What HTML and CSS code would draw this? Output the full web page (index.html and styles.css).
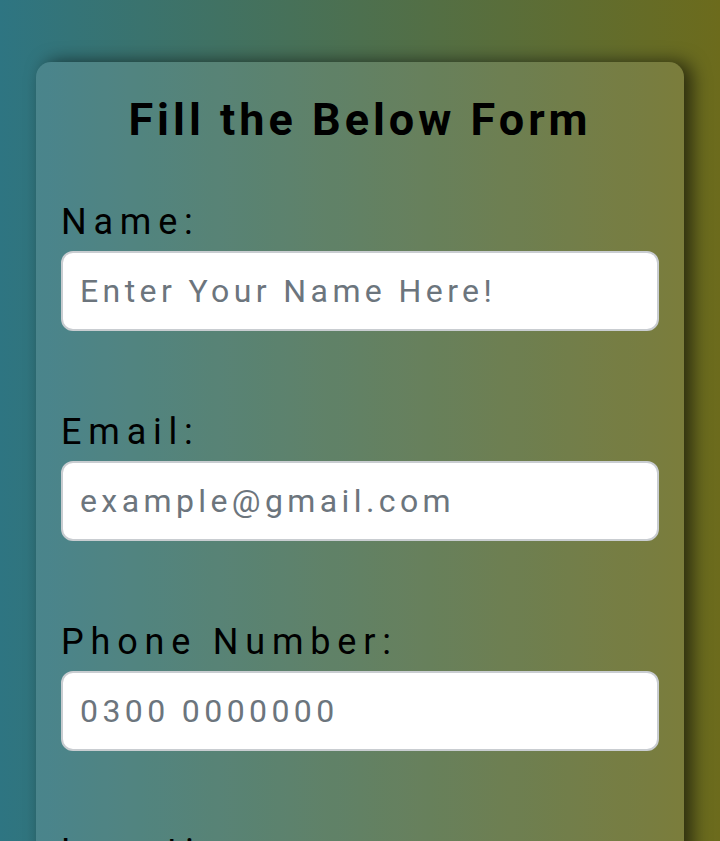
FILE: index.html
```html
<!DOCTYPE html>
<html lang="en">
<head>
<meta charset="utf-8">
<title>Form</title>
<link rel="stylesheet" href="styles.css">
</head>
<body>
<div class="page">
  <form class="card">
    <h1 class="title">Fill the Below Form</h1>
    <div class="field">
      <label class="label" for="name">Name:</label>
      <input class="input" id="name" type="text" placeholder="Enter Your Name Here!">
    </div>
    <div class="field">
      <label class="label" for="email">Email:</label>
      <input class="input" id="email" type="email" placeholder="example@gmail.com">
    </div>
    <div class="field">
      <label class="label" for="phone">Phone Number:</label>
      <input class="input" id="phone" type="tel" placeholder="0300 0000000">
    </div>
    <div class="field">
      <label class="label" for="location">Location:</label>
      <input class="input" id="location" type="text" placeholder="Enter Your City">
    </div>
  </form>
</div>
</body>
</html>
```
FILE: styles.css
```css
html, body {
  margin: 0;
  padding: 0;
}
body {
  min-height: 100vh;
  background: linear-gradient(to right, #2e7582, #6c6b1c);
  font-family: Roboto, "Liberation Sans", sans-serif;
  overflow: hidden;
}
.page {
  padding: 62px 36px 40px;
}
.card {
  display: flex;
  flex-direction: column;
  padding: 31px 25px 40px;
  border-radius: 15px;
  background: rgba(255, 255, 255, 0.12);
  box-shadow: 8px 0 18px rgba(0, 0, 0, 0.6);
}
.title {
  margin: 0;
  font-size: 45px;
  line-height: 53px;
  font-weight: 700;
  text-align: center;
  letter-spacing: 4px;
  color: #000;
}
.field {
  display: flex;
  flex-direction: column;
  margin-top: 80px;
}
.title + .field {
  margin-top: 55px;
}
.label {
  font-size: 36px;
  line-height: 43px;
  letter-spacing: 6.8px;
  color: #000;
  margin-bottom: 7px;
}
.input {
  box-sizing: border-box;
  height: 80px;
  margin: 0;
  padding: 0 16px 0 17px;
  border: 2px solid #c9cdd1;
  border-radius: 12px;
  background: #fff;
  font-family: Roboto, "Liberation Sans", sans-serif;
  font-size: 32px;
  letter-spacing: 4.4px;
  color: #212529;
  outline: none;
}
.input::placeholder {
  color: #6c757d;
  opacity: 1;
}
```
